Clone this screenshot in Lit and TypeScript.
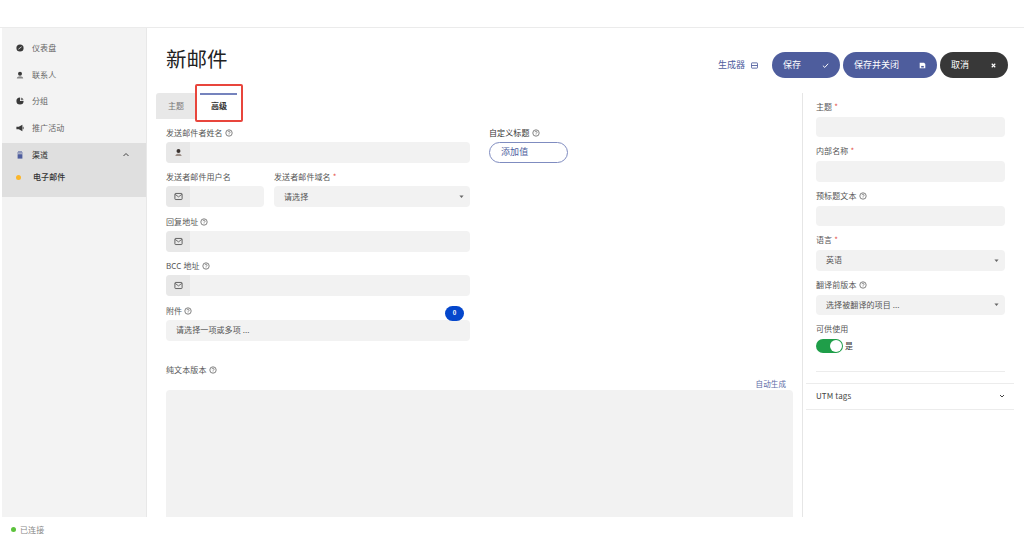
import { LitElement, html, css, svg } from "lit";
import { customElement } from "lit/decorators.js";

const help = html`<svg class="help" viewBox="0 0 10 10"><circle cx="5" cy="5" r="4" fill="none" stroke="#555" stroke-width=".9"/><path d="M3.700 4a1.300 1.300 0 1 1 1.900 1.200c-.4.2-.6.4-.6.9" fill="none" stroke="#555" stroke-width=".8"/><circle cx="5" cy="7.300" r=".5" fill="#555"/></svg>`;
const req = html`<span class="req">*</span>`;
const mail = svg`<svg class="ico" viewBox="0 0 10 10"><rect x="1" y="1.600" width="8" height="6.800" rx=".8" fill="none" stroke="#555" stroke-width="1"/><path d="M1.200 2.600 5 5.400l3.800-2.800" fill="none" stroke="#555" stroke-width=".9"/></svg>`;
const person = svg`<svg class="ico" viewBox="0 0 10 10"><circle cx="5" cy="3.400" r="2.200" fill="#3a3330"/><path d="M1.500 9c.3-2 1.600-2.600 3.500-2.600S8.200 7 8.500 9z" fill="#9c8f88"/></svg>`;
const caret = html`<svg class="caret" viewBox="0 0 6 4"><path d="M.5.5h5L3 3.500z" fill="#666"/></svg>`;

@customElement("app-root")
export class AppRoot extends LitElement {
  static styles = css`
    :host { display: block; height: 540px; width: 1024px; overflow: hidden; background: #fff; color: #555;
      font-family: "Noto Sans CJK SC", "Noto Sans", sans-serif; font-size: 8px; line-height: 10px; letter-spacing: .1px; }
    * { box-sizing: border-box; }
    .shell { display: flex; flex-direction: column; height: 540px; }
    .top { height: 28px; flex: none; background: #fff; border-bottom: 1px solid #ebebeb; }
    .body { flex: 1; display: flex; min-height: 0; }
    .side { flex: none; margin-left: 2px; background: #f3f3f3; border-right: 1px solid #e8e8e8; width: 145px; padding-top: 7px; }
    .nav { height: 26.600px; display: flex; align-items: center; padding-left: 14px; gap: 8px; color: #666; }
    .nav svg { width: 8px; height: 8px; flex: none; }
    .group { margin-top: 2px; height: 54px; background: #dfdfdf; }
    .group .nav { color: #333; height: 24px; position: relative; }
    .chev { width: 7px; height: 7px; margin-left: auto; margin-right: 16px; }
    .sub { display: flex; align-items: center; padding-left: 14px; gap: 12px; margin-top: 1px; height: 18px; color: #333; font-weight: 500; }
    .dot { width: 5px; height: 5px; border-radius: 50%; background: #fbb62b; }
    .main { flex: 1; display: flex; flex-direction: column; min-width: 0; padding-left: 9px; position: relative; }
    .head { display: flex; align-items: flex-start; height: 65px; padding-left: 10px; padding-right: 16px; padding-top: 24px; }
    h1 { margin: -9px 0 0; font-size: 20.500px; line-height: 30px; font-weight: 400; color: #222; letter-spacing: 0; }
    .builder { margin-left: auto; color: #4e5d9d; display: flex; align-items: center; gap: 6px; margin-right: 14px; font-size: 9px; height: 26px; letter-spacing: 0; }
    .builder svg { width: 7px; height: 7px; }
    .btn { height: 26px; border-radius: 13px; color: #fff; background: #4e5d9d; display: flex; align-items: center; justify-content: space-between; padding: 0 11px; margin-right: 3px; font-size: 9px; letter-spacing: 0; }
    .btn svg { width: 7px; height: 7px; }
    .w68 { width: 68px; } .w94 { width: 94px; }
    .dark { background: #383838; margin-right: 0; }
    .cols { flex: 1; display: flex; min-height: 0; }
    .left { width: 646px; flex: none; display: flex; flex-direction: column; }
    .tabs { display: flex; height: 26px; flex: none; }
    .tab { width: 40px; background: #e8e8e8; border-radius: 3px 0 0 0; display: flex; align-items: center; justify-content: center; color: #777; }
    .tab.on { width: 46px; background: #fff; color: #333; font-weight: 700; position: relative; }
    .tab.on::before { content: ""; position: absolute; left: 4px; right: 5px; top: 0; height: 2px; background: #7583bd; }
    .mark { position: absolute; left: 48px; top: 56px; width: 48px; height: 38px; border: 2px solid #e8453c; border-radius: 2px; }
    .formwrap { padding-left: 10px; flex: 1; display: flex; flex-direction: column; min-height: 0; }
    .grid { display: grid; grid-template-columns: 304px 98px; column-gap: 19px; padding-top: 8.700px; }
    .col { display: flex; flex-direction: column; }
    .label { height: 10px; display: flex; align-items: center; gap: 2px; color: #555; margin-bottom: 4px; white-space: nowrap; }
    .help { width: 8px; height: 8px; }
    .req { color: #e5534b; }
    .field { margin-bottom: 9.500px; position: relative; }
    .input { height: 21px; background: #f2f2f2; border-radius: 4px; display: flex; align-items: center; overflow: hidden; color: #555; }
    .addon { width: 24px; height: 100%; background: #e8e8e8; display: flex; align-items: center; justify-content: center; flex: none; }
    .ico { width: 9px; height: 9px; }
    .val { padding-left: 10px; flex: 1; }
    .caret { width: 5px; height: 3.500px; margin-right: 6px; }
    .row { display: grid; grid-template-columns: 98px 196px; gap: 10px; }
    .badge { position: absolute; right: 6px; top: 0; width: 19px; height: 15px; border-radius: 8px; background: #0547cc; color: #fff; font-size: 6px; font-weight: 700; display: flex; align-items: center; justify-content: center; }
    .add { width: 79px; height: 21px; border: 1px solid #7f8cc0; border-radius: 11px; color: #4e5d9d; display: flex; align-items: center; padding-left: 11px; font-size: 9px; }
    .plain { margin-top: 15px; }
    .auto { text-align: right; color: #5b69a6; font-size: 7.500px; height: 10px; margin-bottom: 1px; padding-right: 16px; }
    .area { flex: 1; background: #f2f2f2; border-radius: 4px 4px 0 0; width: 627px; }
    .right { width: 222px; flex: none; border-left: 1px solid #e6e6e6; padding-top: 8.500px; display: flex; flex-direction: column; }
    .rf { padding: 0 19px 0 13px; }
    .rf .label { margin-bottom: 5px; }
    .rf .field { margin-bottom: 9px; }
    .rf .input { height: 20.500px; }
    .tog { display: flex; align-items: center; gap: 2px; height: 14px; color: #333; }
    .track { width: 27px; height: 14px; border-radius: 7px; background: #1f9e49; position: relative; }
    .track::after { content: ""; position: absolute; right: 1px; top: 1px; width: 12px; height: 12px; border-radius: 50%; background: #fff; }
    .hr { height: 1px; background: #ececec; margin: 18px 19px 11px 13px; }
    .utm { margin: 0 10px 0 3px; height: 27px; border-top: 1px solid #ececec; border-bottom: 1px solid #ececec; display: flex; align-items: center; justify-content: space-between; padding: 0 9px 1px 10px; color: #444; }
    .utm svg { width: 6px; height: 6px; }
    .status { height: 23px; flex: none; background: #fff; display: flex; align-items: center; padding-left: 11px; padding-top: 2px; gap: 4px; color: #888; }
    .status i { width: 5px; height: 5px; border-radius: 50%; background: #5cc23c; }
  `;

  field(label: unknown, content: unknown, extra: unknown = "") {
    return html`<div class="field"><div class="label">${label}</div>${extra}${content}</div>`;
  }

  render() {
    const c = "#3a3a3a";
    return html`<div class="shell">
      <div class="top"></div>
      <div class="body">
        <aside class="side">
          <div class="nav"><svg viewBox="0 0 10 10"><circle cx="5" cy="5" r="4.500" fill="${c}"/><path d="M3 6.500 7 3.500" stroke="#eee" stroke-width="1"/></svg>仪表盘</div>
          <div class="nav"><svg viewBox="0 0 10 10"><circle cx="5" cy="3.500" r="2.500" fill="${c}"/><path d="M1 9.500c0-2 2-3 4-3s4 1 4 3z" fill="#8a8a8a"/></svg>联系人</div>
          <div class="nav"><svg viewBox="0 0 10 10"><path d="M5 .5v4.500h4.500A4.500 4.500 0 1 1 5 .5z" fill="${c}"/><path d="M6 .5A4 4 0 0 1 9.500 4H6z" fill="#777"/></svg>分组</div>
          <div class="nav"><svg viewBox="0 0 10 10"><path d="M.5 3.500h3L8 1v8L3.500 6.500h-3z" fill="${c}"/><path d="M9 3.500v3" stroke="${c}"/></svg>推广活动</div>
          <div class="group">
            <div class="nav"><svg viewBox="0 0 10 10"><path d="M2 4h6v5.500H2z" fill="#4e5d9d"/><path d="M1.500 2.500h7M2.500 1h5" stroke="#4e5d9d" stroke-width="1"/></svg>渠道<svg class="chev" viewBox="0 0 8 8"><path d="M1.500 5 4 2.500 6.500 5" fill="none" stroke="#444" stroke-width="1"/></svg></div>
            <div class="sub"><span class="dot"></span>电子邮件</div>
          </div>
        </aside>
        <main class="main">
          <div class="head">
            <h1>新邮件</h1>
            <div class="builder">生成器<svg viewBox="0 0 8 8"><rect x=".5" y="1" width="7" height="6" rx=".7" fill="none" stroke="#4e5d9d"/><path d="M.5 4h7" stroke="#4e5d9d"/></svg></div>
            <div class="btn w68">保存<svg viewBox="0 0 8 8"><path d="M1 4.200 3.200 6.200 7 2" fill="none" stroke="#fff" stroke-width="1.100"/></svg></div>
            <div class="btn w94">保存并关闭<svg viewBox="0 0 8 8"><path d="M.8.800h5L7.200 2.200v5H.8z" fill="#fff"/><rect x="2.500" y="4.500" width="3" height="1.800" fill="#4e5d9d"/></svg></div>
            <div class="btn w68 dark">取消<svg viewBox="0 0 8 8"><path d="M2 2l4 4M6 2 2 6" stroke="#fff" stroke-width="1.300"/></svg></div>
          </div>
          <div class="cols">
            <div class="left">
              <div class="tabs"><div class="tab">主题</div><div class="tab on">高级</div></div>
              <div class="formwrap">
                <div class="grid">
                  <div class="col">
                    ${this.field(html`发送邮件者姓名 ${help}`, html`<div class="input"><span class="addon">${person}</span></div>`)}
                    <div class="row">
                      ${this.field("发送者邮件用户名", html`<div class="input"><span class="addon">${mail}</span></div>`)}
                      ${this.field(html`发送者邮件域名 ${req}`, html`<div class="input"><span class="val">请选择</span>${caret}</div>`)}
                    </div>
                    ${this.field(html`回复地址 ${help}`, html`<div class="input"><span class="addon">${mail}</span></div>`)}
                    ${this.field(html`BCC 地址 ${help}`, html`<div class="input"><span class="addon">${mail}</span></div>`)}
                    ${this.field(html`附件 ${help}`, html`<div class="input"><span class="val">请选择一项或多项 ...</span></div>`, html`<span class="badge">0</span>`)}
                  </div>
                  <div class="col">
                    <div class="label" style="color:#333">自定义标题 ${help}</div>
                    <div class="add">添加值</div>
                  </div>
                </div>
                <div class="label plain">纯文本版本 ${help}</div>
                <div class="auto">自动生成</div>
                <div class="area"></div>
              </div>
            </div>
            <aside class="right">
              <div class="rf">
                ${this.field(html`主题 ${req}`, html`<div class="input"></div>`)}
                ${this.field(html`内部名称 ${req}`, html`<div class="input"></div>`)}
                ${this.field(html`预标题文本 ${help}`, html`<div class="input"></div>`)}
                ${this.field(html`语言 ${req}`, html`<div class="input"><span class="val">英语</span>${caret}</div>`)}
                ${this.field(html`翻译前版本 ${help}`, html`<div class="input"><span class="val">选择被翻译的项目 ...</span>${caret}</div>`)}
                <div class="label">可供使用</div>
                <div class="tog"><span class="track"></span>是</div>
              </div>
              <div class="hr"></div>
              <div class="utm">UTM tags<svg viewBox="0 0 6 6"><path d="M1 2 3 4 5 2" fill="none" stroke="#444"/></svg></div>
            </aside>
          </div>
          <div class="mark"></div>
        </main>
      </div>
      <div class="status"><i></i>已连接</div>
    </div>`;
  }
}
